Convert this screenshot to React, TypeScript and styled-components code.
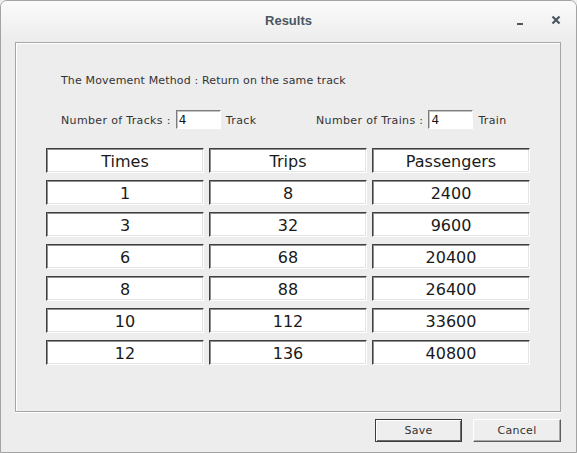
import React, { useState } from 'react';
import styled, { createGlobalStyle } from 'styled-components';

type ResultRow = {
  times: number;
  trips: number;
  passengers: number;
};

const rows: ResultRow[] = [
  { times: 1, trips: 8, passengers: 2400 },
  { times: 3, trips: 32, passengers: 9600 },
  { times: 6, trips: 68, passengers: 20400 },
  { times: 8, trips: 88, passengers: 26400 },
  { times: 10, trips: 112, passengers: 33600 },
  { times: 12, trips: 136, passengers: 40800 },
];

const GlobalStyle = createGlobalStyle`
  html, body {
    margin: 0;
    padding: 0;
    background: #ededed;
  }
  * {
    box-sizing: border-box;
  }
`;

export default function App() {
  const [tracks, setTracks] = useState<string>('4');
  const [trains, setTrains] = useState<string>('4');

  return (
    <>
      <GlobalStyle />
      <Styled.Window>
        <Styled.TitleBar>
          <span />
          <Styled.Title>Results</Styled.Title>
          <Styled.Controls>
            <Styled.ControlButton aria-label="minimize">
              <svg width="12" height="12" viewBox="0 0 12 12">
                <rect x="1" y="9" width="6" height="2" fill="#4b5660" />
              </svg>
            </Styled.ControlButton>
            <Styled.ControlButton aria-label="close">
              <svg width="12" height="12" viewBox="0 0 12 12">
                <path d="M2.5 2.5 L9.5 9.5 M9.5 2.5 L2.5 9.5" stroke="#4b5660" strokeWidth="2.2" />
              </svg>
            </Styled.ControlButton>
          </Styled.Controls>
        </Styled.TitleBar>

        <Styled.Body>
          <Styled.Panel>
            <Styled.Heading>The Movement Method : Return on the same track</Styled.Heading>
            <Styled.Params>
              <Styled.ParamGroup>
                <Styled.Label>Number of Tracks :</Styled.Label>
                <Styled.Input value={tracks} onChange={(e) => setTracks(e.target.value)} />
                <Styled.Label>Track</Styled.Label>
              </Styled.ParamGroup>
              <Styled.ParamGroup>
                <Styled.Label>Number of Trains :</Styled.Label>
                <Styled.Input value={trains} onChange={(e) => setTrains(e.target.value)} />
                <Styled.Label>Train</Styled.Label>
              </Styled.ParamGroup>
            </Styled.Params>
            <Styled.Table>
              <Styled.Cell>Times</Styled.Cell>
              <Styled.Cell>Trips</Styled.Cell>
              <Styled.Cell>Passengers</Styled.Cell>
              {rows.map((row) => (
                <React.Fragment key={row.times}>
                  <Styled.Cell>{row.times}</Styled.Cell>
                  <Styled.Cell>{row.trips}</Styled.Cell>
                  <Styled.Cell>{row.passengers}</Styled.Cell>
                </React.Fragment>
              ))}
            </Styled.Table>
          </Styled.Panel>

          <Styled.Buttons>
            <Styled.Button $default>Save</Styled.Button>
            <Styled.Button>Cancel</Styled.Button>
          </Styled.Buttons>
        </Styled.Body>
      </Styled.Window>
    </>
  );
}

const Styled = {
  Window: styled.div`
    width: 577px;
    height: 453px;
    display: flex;
    flex-direction: column;
    border: 1px solid #a3a3a3;
    border-radius: 7px 7px 0 0;
    background: #ededed;
    overflow: hidden;
    font-family: 'DejaVu Sans', 'Liberation Sans', sans-serif;
  `,
  TitleBar: styled.div`
    height: 38px;
    display: grid;
    grid-template-columns: 1fr auto 1fr;
    align-items: center;
    background: linear-gradient(#fbfbfb, #ededed);
  `,
  Title: styled.div`
    font-family: 'Liberation Sans', Arial, sans-serif;
    font-weight: 700;
    font-size: 13px;
    color: #4b5660;
    padding-top: 1px;
  `,
  Controls: styled.div`
    display: flex;
    justify-content: flex-end;
    align-items: center;
    gap: 22px;
    padding-right: 14px;
  `,
  ControlButton: styled.div`
    width: 12px;
    height: 12px;
    display: flex;
  `,
  Body: styled.div`
    flex: 1;
    display: flex;
    flex-direction: column;
    padding: 3px 15px 0 14px;
  `,
  Panel: styled.div`
    height: 370px;
    border: 1px solid #a6a6a6;
    box-shadow: inset 1px 1px 0 #ffffff, 0 1px 0 #ffffff;
    display: flex;
    flex-direction: column;
  `,
  Heading: styled.div`
    margin: 31px 0 0 45px;
    font-size: 11px;
    line-height: 14px;
    letter-spacing: 0.15px;
    color: #333333;
  `,
  Params: styled.div`
    margin: 22px 0 0 45px;
    display: flex;
    align-items: center;
    height: 19px;
  `,
  ParamGroup: styled.div`
    flex: 0 0 255px;
    display: flex;
    align-items: center;
    gap: 5px;
  `,
  Label: styled.span`
    font-size: 11px;
    letter-spacing: 0.35px;
    color: #333333;
    white-space: nowrap;
    padding-top: 1px;
  `,
  Input: styled.input`
    width: 45px;
    height: 19px;
    padding: 0 2px;
    margin: 0;
    border-style: solid;
    border-width: 1px;
    border-color: #7c7c7c #ffffff #ffffff #7c7c7c;
    box-shadow: inset 1px 1px 0 #c4c4c4;
    background: #ffffff;
    font-family: 'DejaVu Sans', sans-serif;
    font-size: 12px;
    color: #111111;
    outline: none;
  `,
  Table: styled.div`
    margin: 19px 0 0 30px;
    display: grid;
    grid-template-columns: repeat(3, 158px);
    grid-auto-rows: 25px;
    column-gap: 5px;
    row-gap: 7px;
  `,
  Cell: styled.div`
    display: flex;
    align-items: center;
    justify-content: center;
    padding-top: 1px;
    background: #ffffff;
    border-style: solid;
    border-width: 1px;
    border-color: #3f3f3f #ffffff #ffffff #3f3f3f;
    box-shadow: inset 1px 1px 0 #8e8e8e, inset -1px -1px 0 #e4e4e4;
    font-size: 16px;
    color: #1a1a1a;
  `,
  Buttons: styled.div`
    margin-top: 7px;
    display: flex;
    justify-content: flex-end;
    gap: 11px;
  `,
  Button: styled.button<{ $default?: boolean }>`
    width: ${(p) => (p.$default ? '87px' : '88px')};
    height: 23px;
    margin: 0;
    padding: 0;
    background: #eeeeee;
    font-family: 'DejaVu Sans', sans-serif;
    font-size: 11px;
    letter-spacing: 0.3px;
    color: #333333;
    border-style: solid;
    border-width: 1px;
    border-color: ${(p) => (p.$default ? '#3c3c3c' : '#ffffff #5c5c5c #5c5c5c #ffffff')};
    box-shadow: ${(p) =>
      p.$default
        ? 'inset 1px 1px 0 #ffffff, inset -1px -1px 0 #6a6a6a'
        : 'inset -1px -1px 0 #a8a8a8'};
  `,
};
